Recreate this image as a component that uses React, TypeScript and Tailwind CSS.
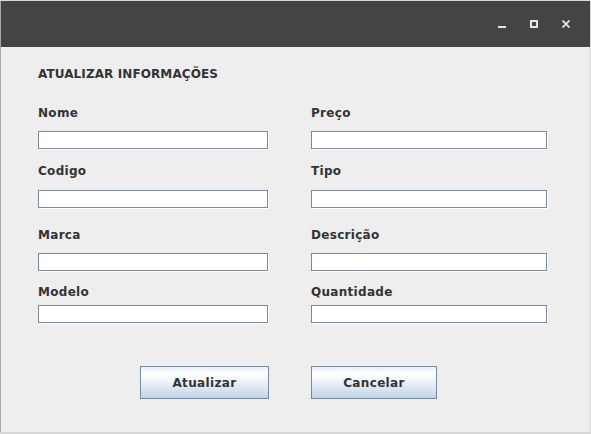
import React from "react";

const font = { fontFamily: '"DejaVu Sans", "Liberation Sans", sans-serif' };

function Label({ children }: { children: React.ReactNode }) {
  return <div className="h-[14px] leading-[14px] text-[12px] font-bold tracking-[0.3px] text-[#333333] whitespace-nowrap">{children}</div>;
}

function Input({ w }: { w: string }) {
  return <div className={`${w} h-[18px] bg-white border border-[#7a8a99] shadow-[1px_1px_0_#ffffff]`} />;
}

function Row({ left, right, labelMt, inputMt }: { left: string; right: string; labelMt: string; inputMt: string }) {
  return (
    <div className="flex">
      <div className="w-[273px] flex flex-col">
        <div className={labelMt}><Label>{left}</Label></div>
        <div className={inputMt}><Input w="w-[230px]" /></div>
      </div>
      <div className="w-[236px] flex flex-col">
        <div className={labelMt}><Label>{right}</Label></div>
        <div className={inputMt}><Input w="w-[236px]" /></div>
      </div>
    </div>
  );
}

function Btn({ children, w }: { children: React.ReactNode; w: string }) {
  return (
    <div
      className={`${w} h-[33px] border border-[#7a8a99] flex items-center justify-center text-[12px] font-bold tracking-[0.35px] text-[#333333] bg-[linear-gradient(to_bottom,#e6eef8_0%,#ffffff_20%,#f2f6fb_40%,#c0d4e8_100%)]`}
    >
      {children}
    </div>
  );
}

export default function App() {
  return (
    <div className="w-[591px] h-[434px] bg-[#d8d8d8] overflow-hidden" style={font}>
      <div className="mt-[1px] w-[590px] h-[431px] border-l border-[#a8a8a8] flex flex-col bg-[#eeeeee]">
        <div className="h-[46px] bg-[#444444] flex items-center justify-end shrink-0">
          <div className="w-[8px] h-[2px] bg-[#e4e4e4] mt-[6px] mr-[24px]" />
          <div className="w-[8px] h-[8px] border-2 border-[#e4e4e4] mr-[24px]" />
          <svg width="8" height="8" viewBox="0 0 8 8" className="mr-[20px]">
            <path d="M0.5 0.5 L7.5 7.5 M7.5 0.5 L0.5 7.5" stroke="#e4e4e4" strokeWidth="1.8" />
          </svg>
        </div>
        <div className="flex-1 pl-[37px] pt-[20px]">
          <div className="h-[14px] leading-[14px] text-[12px] font-bold tracking-[0.1px] text-[#333333]">ATUALIZAR INFORMAÇÕES</div>
          <Row left="Nome" right="Preço" labelMt="mt-[25px]" inputMt="mt-[11px]" />
          <Row left="Codigo" right="Tipo" labelMt="mt-[15px]" inputMt="mt-[12px]" />
          <Row left="Marca" right="Descrição" labelMt="mt-[20px]" inputMt="mt-[11px]" />
          <Row left="Modelo" right="Quantidade" labelMt="mt-[14px]" inputMt="mt-[6px]" />
          <div className="flex mt-[43px]">
            <div className="ml-[102px]"><Btn w="w-[129px]">Atualizar</Btn></div>
            <div className="ml-[42px]"><Btn w="w-[126px]">Cancelar</Btn></div>
          </div>
        </div>
      </div>
    </div>
  );
}
